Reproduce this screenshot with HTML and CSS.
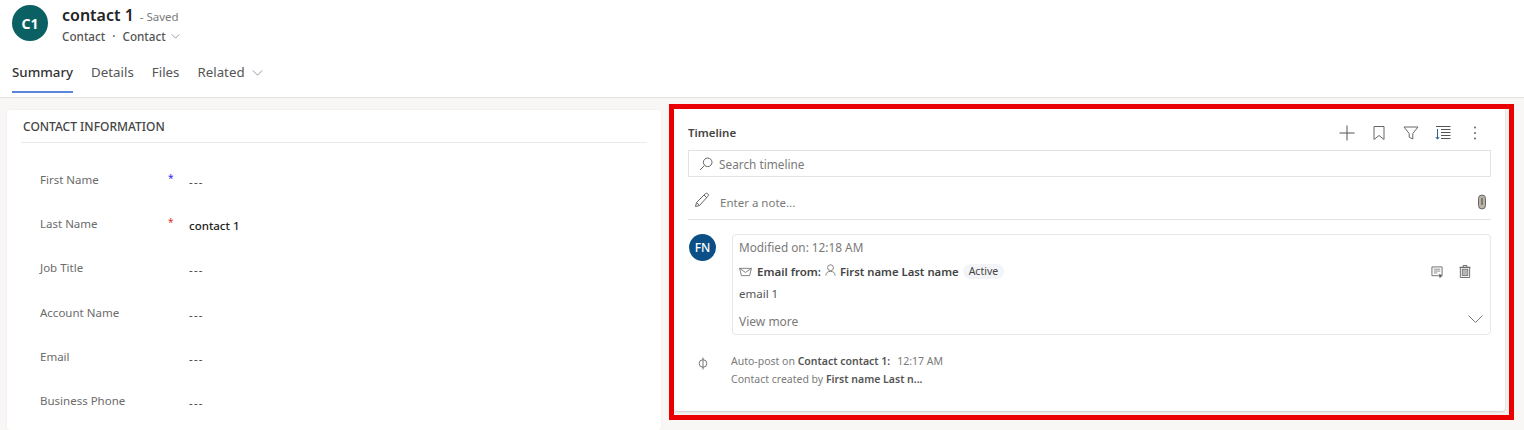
FILE: index.html
```html
<!DOCTYPE html>
<html lang="en">
<head>
<meta charset="utf-8">
<title>contact 1</title>
<link rel="stylesheet" href="styles.css">
</head>
<body>
<header class="head">
  <div class="identity">
    <div class="avatar">C1</div>
    <div class="id-text">
      <div class="title-line"><span class="title">contact 1</span><span class="saved">- Saved</span></div>
      <div class="sub-line"><span>Contact</span><span class="dot">·</span><span>Contact</span>
        <svg class="chev-s" viewBox="0 0 10 6"><path d="M.5.5 5 5 9.500.5"/></svg></div>
    </div>
  </div>
  <nav class="tabs">
    <span class="tab active">Summary</span>
    <span class="tab">Details</span>
    <span class="tab">Files</span>
    <span class="tab">Related <svg class="chev-t" viewBox="0 0 12 7"><path d="M.5.5 6 6l5.500-5.500"/></svg></span>
  </nav>
</header>
<main class="main">
  <section class="card">
    <h2 class="card-title">CONTACT INFORMATION</h2>
    <div class="rows">
      <div class="row"><span class="label">First Name</span><span class="req blue">*</span><span class="val">---</span></div>
      <div class="row"><span class="label">Last Name</span><span class="req red">*</span><span class="val strong">contact 1</span></div>
      <div class="row"><span class="label">Job Title</span><span class="req"></span><span class="val">---</span></div>
      <div class="row"><span class="label">Account Name</span><span class="req"></span><span class="val">---</span></div>
      <div class="row"><span class="label">Email</span><span class="req"></span><span class="val">---</span></div>
      <div class="row"><span class="label">Business Phone</span><span class="req"></span><span class="val">---</span></div>
    </div>
  </section>
  <section class="timeline">
    <div class="panel">
      <div class="tl-head">
        <span class="tl-title">Timeline</span>
        <div class="tl-tools">
          <svg class="tool" viewBox="0 0 16 16"><path d="M8 .5v15M.5 8h15" stroke="#555"/></svg>
          <svg class="tool" viewBox="0 0 16 16"><path d="M3 1.500h10v13L8 10.500l-5 4z" stroke="#666"/></svg>
          <svg class="tool" viewBox="0 0 16 16"><path d="M1 2h14L9.800 8.500V14l-3.600-1.800V8.500z" stroke="#666"/></svg>
          <svg class="tool" viewBox="0 0 16 16"><path d="M1 1.500h14.500M6 4.500h9.500M6 7.500h9.500M6 10.500h9.500M6 13.500h9.500" stroke="#555"/><path d="M2.500 4v10M.8 12l1.700 2.200L4.200 12" stroke="#2f5f8f"/></svg>
          <svg class="tool dots" viewBox="0 0 16 16"><circle cx="8" cy="2.500" r="1"/><circle cx="8" cy="8" r="1"/><circle cx="8" cy="13.500" r="1"/></svg>
        </div>
      </div>
      <div class="search">
        <svg class="search-ic" viewBox="0 0 14 14"><circle cx="8.700" cy="5.300" r="4.300"/><path d="M5.500 8.500 1 13"/></svg>
        <span>Search timeline</span>
      </div>
      <div class="note">
        <svg class="pencil" viewBox="0 0 16 16"><path d="M1.500 14.500l1-4L11 2c1-1 2-1 2.800-.2s.8 1.800-.2 2.800L5.500 13.500zM2.500 10.500l3 3M10 3l3 3"/></svg>
        <span class="note-text">Enter a note...</span>
        <svg class="clip" viewBox="0 0 10 16"><rect x="1.500" y="1" width="7" height="14" rx="3.500" fill="#b9b3a6" stroke="#666"/><path d="M5 4v7" stroke="#444"/></svg>
      </div>
      <div class="entry">
        <div class="fn">FN</div>
        <div class="bubble">
          <div class="modified">Modified on: 12:18 AM</div>
          <div class="email-line">
            <svg class="mail" viewBox="0 0 14 11"><path d="M.5 1.500h13l-2 8H2.500zM.5 1.500 7 6l6.500-4.500"/></svg>
            <b class="from">Email from:</b>
            <svg class="person" viewBox="0 0 12 13"><circle cx="6" cy="4" r="3.200"/><path d="M1 12.500c0-3 2-4.500 5-4.500s5 1.500 5 4.500"/></svg>
            <b class="who">First name Last name</b>
            <span class="badge">Active</span>
            <span class="acts">
              <svg class="act" viewBox="0 0 13 13"><path d="M1 1h11v9.500H8M1 1v9.500h7" fill="none" stroke="#666"/><path d="M3 3.500h7M3 5.500h7M3 7.500h4" stroke="#888"/><path d="M9 9l3 1.500-2.500 2z" fill="#555"/></svg>
              <svg class="act bin" viewBox="0 0 13 15"><path d="M1.500 3h10v11h-10zM.5 3h12M4.500 3V1h4v2" fill="none" stroke="#666"/><rect x="3.500" y="5" width="6" height="7" fill="#b5b5b5"/></svg>
            </span>
          </div>
          <div class="body">email 1</div>
          <div class="more"><span>View more</span>
            <svg class="chev-m" viewBox="0 0 15 8"><path d="M.5.500l7 7 7-7"/></svg></div>
        </div>
      </div>
      <div class="post">
        <svg class="post-ic" viewBox="0 0 10 13"><circle cx="5" cy="6.500" r="3.800"/><path d="M5 .5v12"/></svg>
        <div class="post-text">
          <div>Auto-post on <b>Contact contact 1:</b><span class="post-time">12:17 AM</span></div>
          <div class="post-2">Contact created by <b>First name Last n...</b></div>
        </div>
      </div>
    </div>
  </section>
</main>
</body>
</html>
```

FILE: styles.css
```css
* { box-sizing: border-box; }
html, body { margin: 0; height: 430px; overflow: hidden; }
body { background: #f8f7f6; font-family: "Noto Sans", "Open Sans", sans-serif; color: #444; font-size: 12px; }
b { font-weight: 600; }
svg { display: block; flex: none; fill: none; stroke: #777; stroke-width: 1; }

.head { height: 98px; background: #fff; border-bottom: 1px solid #e3e2e0; padding-left: 12px; }
.identity { display: flex; gap: 14px; padding-top: 5px; height: 56px; }
.avatar { width: 36px; height: 36px; border-radius: 50%; background: #0b6063; color: #fff; font-weight: 700; font-size: 14px; display: flex; align-items: center; justify-content: center; }
.id-text { display: flex; flex-direction: column; margin-top: -1px; }
.title-line { display: flex; align-items: baseline; height: 23px; }
.title { font-size: 16px; font-weight: 600; color: #242424; }
.saved { font-size: 11.500px; color: #7a7a7a; margin-left: 6px; }
.sub-line { display: flex; align-items: center; font-size: 11.700px; font-weight: 500; color: #555; height: 18px; }
.dot { margin: 0 7px; }
.chev-s { width: 9px; height: 5px; margin-left: 5px; stroke: #888; }

.tabs { display: flex; gap: 18px; height: 37px; }
.tab { height: 37px; padding-top: 7px; font-size: 13.300px; color: #555; display: flex; gap: 7px; }
.tab.active { color: #333; font-weight: 500; border-bottom: 2px solid #5b85d9; }
.chev-t { width: 11px; height: 6px; margin-top: 7px; stroke: #888; }

.main { display: flex; padding: 12px 10px 0 7px; height: 332px; }
.card { width: 654px; height: 320px; background: #fff; padding: 0 14px; border-radius: 3px; box-shadow: 0 0 2px rgba(0,0,0,.08); }
.card-title { margin: 0; height: 33px; padding: 8px 2px 0; font-size: 12px; font-weight: 500; color: #444; border-bottom: 1px solid #eceae8; }
.rows { padding: 22px 0 0 19px; }
.row { display: flex; height: 44.200px; padding-top: 7px; }
.label { width: 128px; color: #6b6b6b; font-size: 11.500px; }
.req { width: 21px; font-size: 10px; line-height: 12px; }
.req.blue { color: #2a2af0; }
.req.red { color: #e03030; }
.val { margin-top: 2px; color: #444; letter-spacing: 1.200px; font-size: 11.500px; }
.val.strong { color: #222; font-weight: 500; letter-spacing: 0; }

.timeline { width: 845px; height: 316px; margin: -6px 0 0 8px; border: 5px solid #ea0000; background: #f3f2f1; }
.panel { height: 302px; width: 831px; background: #fff; padding: 0 14px; box-shadow: 0 1px 2px rgba(0,0,0,.15); border-radius: 0 0 3px 3px; }
.tl-head { display: flex; align-items: center; justify-content: space-between; height: 41px; padding-top: 7px; }
.tl-title { font-weight: 600; font-size: 11.500px; color: #444; margin-top: -2px; }
.tl-tools { display: flex; gap: 16px; padding-right: 8px; }
.tool { width: 16px; height: 16px; }
.dots { fill: #666; stroke: none; }
.search { display: flex; align-items: center; gap: 6px; height: 27px; border: 1px solid #e3e3e3; padding-left: 10px; color: #7a7a7a; font-size: 11.800px; }
.search-ic { width: 14px; height: 14px; stroke: #666; }
.note { display: flex; align-items: center; height: 43px; border-bottom: 1px solid #e3e2e0; padding: 8px 4px 0 6px; color: #7a7a7a; font-size: 11.500px; }
.pencil { width: 16px; height: 16px; stroke: #666; margin-top: -4px; }
.note-text { margin-left: 10px; flex: 1; }
.clip { width: 10px; height: 16px; }
.entry { display: flex; gap: 16px; padding: 14px 0 0 1px; }
.fn { width: 27px; height: 27px; border-radius: 50%; background: #0c4f86; color: #fff; font-size: 12px; font-weight: 500; display: flex; align-items: center; justify-content: center; }
.bubble { flex: 1; height: 101px; border: 1px solid #e6e6e6; border-radius: 4px; padding: 3px 7px 0 6px; }
.modified { height: 22px; line-height: 18px; color: #7a7a7a; font-size: 11.800px; }
.email-line { display: flex; align-items: center; height: 23px; gap: 4px; color: #444; font-size: 11.500px; }
.mail { width: 13px; height: 10px; }
.from { margin-left: 1px; }
.person { width: 11px; height: 12px; margin-top: -3px; }
.who { font-size: 11.300px; }
.badge { background: #f2f4f8; border-radius: 8px; height: 15px; line-height: 15px; font-size: 10.500px; padding: 0 6px; }
.acts { margin-left: auto; display: flex; gap: 16px; padding-right: 12px; align-items: center; }
.act { width: 12px; height: 12px; }
.bin { height: 15px; }
.body { height: 30px; padding-top: 1px; line-height: 20px; color: #555; font-size: 11.500px; }
.more { display: flex; align-items: flex-start; justify-content: space-between; color: #7a7a7a; height: 18px; }
.chev-m { width: 15px; height: 8px; stroke: #777; margin-top: 2px; }
.post { display: flex; padding: 17px 0 0 10px; color: #7a7a7a; font-size: 10.500px; }
.post-ic { width: 10px; height: 13px; margin-top: 5px; }
.post-text { margin-left: 23px; line-height: 18px; }
.post-text b { color: #555; }
.post-time { margin-left: 7px; }
```
